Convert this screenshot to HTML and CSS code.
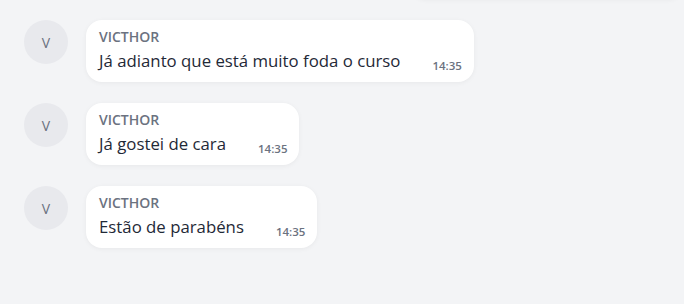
FILE: index.html
```html
<!DOCTYPE html>
<html lang="pt-BR">
<head>
    <meta charset="UTF-8">
    <meta name="viewport" content="width=device-width, initial-scale=1.0">
    <title>Chat</title>
    <link rel="stylesheet" href="styles.css">
</head>
<body>
    <div class="chat">
        <div class="message own">
            <div class="bubble own-bubble"></div>
        </div>

        <div class="message">
            <div class="avatar">V</div>
            <div class="bubble">
                <div class="author">VICTHOR</div>
                <div class="body">
                    <span class="text">Já adianto que está muito foda o curso</span>
                    <span class="time">14:35</span>
                </div>
            </div>
        </div>

        <div class="message">
            <div class="avatar">V</div>
            <div class="bubble">
                <div class="author">VICTHOR</div>
                <div class="body">
                    <span class="text">Já gostei de cara</span>
                    <span class="time">14:35</span>
                </div>
            </div>
        </div>

        <div class="message">
            <div class="avatar">V</div>
            <div class="bubble">
                <div class="author">VICTHOR</div>
                <div class="body">
                    <span class="text">Estão de parabéns</span>
                    <span class="time">14:35</span>
                </div>
            </div>
        </div>
    </div>
</body>
</html>
```

FILE: styles.css
```css
* {
    margin: 0;
    padding: 0;
    box-sizing: border-box;
    font-family: 'Open Sans', 'Noto Sans', sans-serif;
}

body {
    background-color: #f3f4f6;
    height: 100vh;
    overflow: hidden;
}

.chat {
    display: flex;
    flex-direction: column;
    gap: 21px;
    padding: 0 24px;
}

.message {
    display: flex;
    align-items: flex-start;
    gap: 18px;
}

.message.own {
    justify-content: flex-end;
    margin-top: -63px;
    margin-right: -24px;
}

.own-bubble {
    width: 274px;
    height: 63px;
    border-radius: 16px 0 16px 16px;
}

.avatar {
    width: 44px;
    height: 44px;
    border-radius: 50%;
    background: #e8e9ed;
    color: #6b7280;
    display: flex;
    align-items: center;
    justify-content: center;
    font-size: 14px;
    flex-shrink: 0;
}

.bubble {
    background: white;
    border-radius: 16px;
    padding: 7px 12px 10px 13px;
    box-shadow: 0 1px 5px rgba(0, 0, 0, 0.05);
    height: 62px;
}

.author {
    font-size: 14px;
    font-weight: 600;
    color: #6b7280;
    line-height: 19px;
}

.body {
    display: flex;
    align-items: flex-end;
    gap: 32px;
    margin-top: 3px;
}

.text {
    font-size: 16.8px;
    color: #1f2937;
    line-height: 23px;
}

.time {
    font-size: 11.5px;
    font-weight: 600;
    color: #6b7280;
    line-height: 14px;
    margin-bottom: -1px;
}
```
